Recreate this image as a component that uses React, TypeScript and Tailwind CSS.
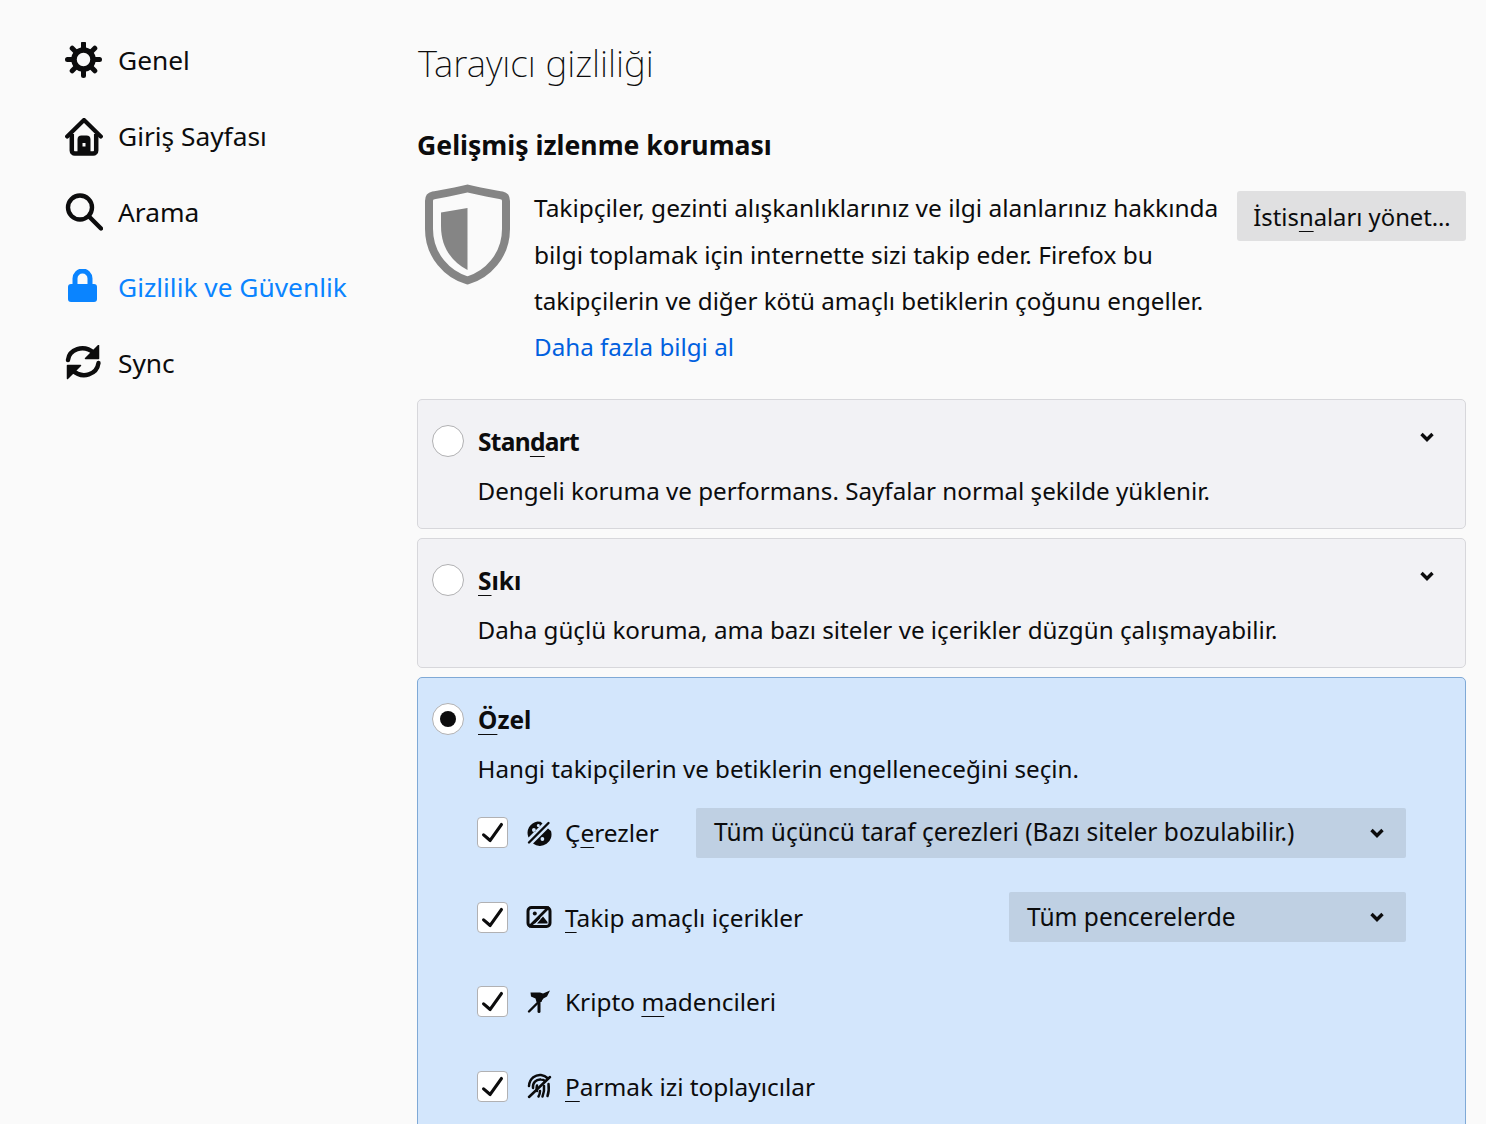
import type { ReactNode } from "react";

const Chevron = ({ className }: { className: string }) => (
  <svg viewBox="0 0 14 10" className={className} fill="none" stroke="#0c0c0d" strokeWidth="3.4">
    <path d="M1.5 2 7 7.500 12.500 2" />
  </svg>
);

const GearIcon = () => (
  <svg viewBox="0 1 38 38" className="h-[38px] w-[38px]" fill="none" stroke="#0c0c0d">
    <circle cx="18.500" cy="18.500" r="9.500" strokeWidth="5.500" />
    <path
      d="M18.500 2.500v5M18.500 29.500v5M2.500 18.500h5M29.500 18.500h5M7.200 7.200l3.500 3.500M26.300 26.300l3.500 3.500M29.800 7.200l-3.500 3.500M10.700 26.300l-3.500 3.500"
      strokeWidth="5"
      strokeLinecap="round"
    />
  </svg>
);

const HomeIcon = () => (
  <svg viewBox="0 0 38 38" className="h-[38px] w-[38px]" fill="none" stroke="#0c0c0d">
    <path d="M2.200 18.500 19 2 35.800 18.500" strokeWidth="4.200" strokeLinecap="round" strokeLinejoin="round" />
    <path d="M6.800 16v16.500a3 3 0 0 0 3 3h18.400a3 3 0 0 0 3-3V16" strokeWidth="4.500" />
    <path
      fillRule="evenodd"
      fill="#0c0c0d"
      stroke="none"
      d="M12.500 35V21.500a4 4 0 0 1 4-4h5a4 4 0 0 1 4 4V35zM17.500 25v3.500h3V25z"
    />
  </svg>
);

const SearchIcon = () => (
  <svg viewBox="0 1 38 38" className="h-[38px] w-[38px]" fill="none" stroke="#0c0c0d" strokeWidth="4.400">
    <circle cx="15" cy="15.500" r="12" />
    <path d="m24 24.500 12 12" strokeLinecap="round" />
  </svg>
);

const LockIcon = () => (
  <svg viewBox="0 2 38 38" className="h-[38px] w-[38px]" fill="none">
    <path d="M10 19v-7.500a7.500 7.500 0 0 1 15 0V19" stroke="#0a84ff" strokeWidth="5" />
    <rect x="3" y="17" width="29" height="18" rx="3" fill="#0a84ff" />
  </svg>
);

const SyncIcon = () => (
  <svg viewBox="1 3 38 38" className="h-[38px] w-[38px]" fill="none" stroke="#0c0c0d">
    <path d="M4 18C5 8 19 1.500 30 11" strokeWidth="4.400" strokeLinecap="round" />
    <path d="M34.500 21C33 32 19 38 8 28" strokeWidth="4.400" strokeLinecap="round" />
    <path d="M34.500 3.500v13h-13z" fill="#0c0c0d" stroke="#0c0c0d" strokeWidth="1.500" strokeLinejoin="round" />
    <path d="M3.500 36.500v-13h13z" fill="#0c0c0d" stroke="#0c0c0d" strokeWidth="1.500" strokeLinejoin="round" />
  </svg>
);

const ShieldIcon = () => (
  <svg viewBox="0 0 88 102" className="h-[102px] w-[88px]">
    <path
      d="M43.500 4.500 C32 7.500 20 9.500 9 11.500 C6.500 12 5 14 5 17 V45 C5 72 24 91 43.500 96.500 C63 91 82 72 82 45 V17 C82 14 80.500 12 78 11.500 C67 9.500 55 7.500 43.500 4.500 Z"
      fill="none"
      stroke="#858585"
      strokeWidth="8"
      strokeLinejoin="round"
    />
    <path d="M43.500 24 V86 C27 77 17 63 17 42 V28.500 Z" fill="#858585" />
  </svg>
);

const CookieIcon = () => (
  <svg viewBox="0 0 26 26" className="h-[26px] w-[26px]">
    <path
      fillRule="evenodd"
      fill="#0c0c0d"
      d="M11.500 1.500A11.500 11.500 0 0 0 2.500 17.500L16.500 3.500 14.500 1.800zM6 10a1.900 1.900 0 1 1 3.800 0 1.900 1.900 0 0 1-3.800 0zM10.800 5.500a1.500 1.500 0 1 1 3 0 1.500 1.500 0 0 1-3 0z"
    />
    <path
      fillRule="evenodd"
      fill="#0c0c0d"
      d="M7 23.500 22 8.500l3 2.500a11.500 11.500 0 0 1-18 12.500zM14.500 19a1.900 1.900 0 1 0 3.800 0 1.900 1.900 0 0 0-3.800 0z"
    />
    <path d="M3 22.500 22.500 3" stroke="#0c0c0d" strokeWidth="2.400" strokeLinecap="round" />
  </svg>
);

const TrackerIcon = () => (
  <svg viewBox="0 0 26 26" className="h-[26px] w-[26px]" fill="none" stroke="#0c0c0d">
    <rect x="2" y="3.500" width="22" height="19" rx="3.500" strokeWidth="3" />
    <path d="M3 23 23 3" strokeWidth="2.600" />
    <circle cx="8.800" cy="9.500" r="2" fill="#0c0c0d" stroke="none" />
    <path d="M5.500 19.500 13 12.500l1.500 1.500-5.500 5.500zM17 12.500l4.500 5.500v1.500H11z" fill="#0c0c0d" stroke="none" />
  </svg>
);

const MinerIcon = () => (
  <svg viewBox="0 0 26 26" className="h-[26px] w-[26px]" fill="none" stroke="#0c0c0d">
    <path d="M4.500 3.500H14L17 4.500 24 1.500 21 7.500 16.500 10 15.500 13H10.500L9.500 9.500 5 7.500z" fill="#0c0c0d" stroke="none" />
    <path d="M3 22.500 16 9.500" strokeWidth="2.400" strokeLinecap="round" />
    <path d="M13 13v9.500" strokeWidth="3" strokeLinecap="round" />
  </svg>
);

const FingerprintIcon = () => (
  <svg viewBox="0 0 26 26" className="h-[26px] w-[26px]" fill="none" stroke="#0c0c0d" strokeWidth="2.500" strokeLinecap="round">
    <path d="M3 13C3.500 5 10 1.500 15 2c3 .3 5 1.500 7 3.500" />
    <path d="M7 15c-.5-5 3-9 8-8.500 1.500 0 3 .6 4 1.500" />
    <path d="M11 18c-.5-2-.500-4 0-5.500" />
    <path d="M3 24 24 4" />
    <path d="M22.500 11c.5 4 .500 8-1 12" />
    <path d="M18 13c.5 4 0 7-1.500 10.500" />
    <path d="M14 18c0 2-.5 4-1.500 5.500" />
  </svg>
);

const nav: { icon: ReactNode; label: string; active?: boolean }[] = [
  { icon: <GearIcon />, label: "Genel" },
  { icon: <HomeIcon />, label: "Giriş Sayfası" },
  { icon: <SearchIcon />, label: "Arama" },
  { icon: <LockIcon />, label: "Gizlilik ve Güvenlik", active: true },
  { icon: <SyncIcon />, label: "Sync" },
];

const Radio = ({ checked }: { checked?: boolean }) => (
  <span className="flex h-8 w-8 shrink-0 items-center justify-center rounded-full border border-[#b1b1b3] bg-white">
    {checked && <span className="h-4 w-4 rounded-full bg-[#0c0c0d]" />}
  </span>
);

const U = ({ children }: { children: ReactNode }) => (
  <span className="underline decoration-1 underline-offset-[5px]">{children}</span>
);

function PresetCard({ label, desc }: { label: ReactNode; desc: string }) {
  return (
    <div className="relative h-[130px] rounded-[5px] border border-[#d7d7db] bg-[#f2f2f5] pl-[14px] pt-[25px]">
      <div className="flex h-8 items-center gap-[14px]">
        <Radio />
        <span className="pt-[2px] text-[24.500px] font-bold">{label}</span>
      </div>
      <p className="mt-[17px] pl-[45.500px] text-[24.200px] leading-[34px]">{desc}</p>
      <Chevron className="absolute right-[31px] top-[32px] h-[10px] w-[14px]" />
    </div>
  );
}

function TrackerRow({ icon, children, select }: { icon: ReactNode; children: ReactNode; select?: ReactNode }) {
  return (
    <div className="flex h-[51px] items-center">
      <span className="flex h-[31px] w-[31px] shrink-0 items-center justify-center rounded-[4px] border border-[#b1b1b3] bg-white">
        <svg viewBox="0 0 31 31" className="h-[31px] w-[31px]" fill="none" stroke="#0c0c0d" strokeWidth="3.400" strokeLinecap="round" strokeLinejoin="round">
          <path d="m6 18 7 6L25 7" />
        </svg>
      </span>
      <span className="ml-[18px] flex w-[26px] shrink-0 justify-center">{icon}</span>
      <span className="ml-[13px] shrink-0 pt-[2px] text-[24.400px]">{children}</span>
      {select}
    </div>
  );
}

const Select = ({ text, className }: { text: string; className: string }) => (
  <div className={`flex h-[50px] items-center justify-between rounded-[2px] bg-[#bfd0e3] pl-[18px] pr-[22px] text-[24.500px] ${className}`}>
    <span>{text}</span>
    <Chevron className="h-[10px] w-[14px]" />
  </div>
);

export default function App() {
  return (
    <div
      className="flex h-[1124px] overflow-hidden bg-[#fafafa] text-[#0c0c0d]"
      style={{ fontFamily: '"Noto Sans", sans-serif' }}
    >
      <aside className="w-[417px] shrink-0 pl-[65px] pt-[42px]">
        <ul className="flex flex-col gap-[37.700px]">
          {nav.map((item) => (
            <li key={item.label} className={`flex h-[38px] items-center gap-[15px] text-[26.300px] ${item.active ? "text-[#0a84ff]" : ""}`}>
              {item.icon}
              <span>{item.label}</span>
            </li>
          ))}
        </ul>
      </aside>

      <main className="mr-[20px] min-w-0 flex-1 pt-[38px]">
        <h1 className="pl-px text-[36.900px] leading-[50px] font-extralight text-[#0c0c0d]">Tarayıcı gizliliği</h1>
        <h2 className="mt-[37px] text-[26.600px] leading-[40px] font-bold">Gelişmiş izlenme koruması</h2>

        <section className="mt-[20px] flex items-start">
          <div className="ml-[7px] shrink-0 -mt-[1px]">
            <ShieldIcon />
          </div>
          <div className="ml-[22px] w-[695px] text-[24.470px] leading-[46.500px]">
            <p className="whitespace-nowrap">Takipçiler, gezinti alışkanlıklarınız ve ilgi alanlarınız hakkında</p>
            <p className="whitespace-nowrap">bilgi toplamak için internette sizi takip eder. Firefox bu</p>
            <p className="whitespace-nowrap text-[24.200px]">takipçilerin ve diğer kötü amaçlı betiklerin çoğunu engeller.</p>
            <a className="relative -top-px text-[24.200px] text-[#0060df]" href="#">Daha fazla bilgi al</a>
          </div>
          <button className="ml-auto mt-[6px] h-[50px] w-[229px] shrink-0 rounded-[3px] bg-[#e0e0e1] pl-px pt-[3px] text-[23.800px]">
            İstis<U>n</U>aları yönet…
          </button>
        </section>

        <div className="mt-[28px] flex flex-col gap-[9px]">
          <PresetCard label={<span className="tracking-[-0.7px]">Stan<U>d</U>art</span>} desc="Dengeli koruma ve performans. Sayfalar normal şekilde yüklenir." />
          <PresetCard label={<><U>S</U>ıkı</>} desc="Daha güçlü koruma, ama bazı siteler ve içerikler düzgün çalışmayabilir." />

          <div className="h-[600px] rounded-[5px] border border-[#7fa9d6] bg-[#d3e6fc] pl-[14px] pt-[25px]">
            <div className="flex h-8 items-center gap-[14px]">
              <Radio checked />
              <span className="pt-[2px] text-[24.500px] font-bold"><U>Ö</U>zel</span>
            </div>
            <p className="mt-[17px] pl-[45.500px] text-[24.200px] leading-[34px]">Hangi takipçilerin ve betiklerin engelleneceğini seçin.</p>
            <div className="mt-[21px] flex flex-col gap-[33.500px] pl-[45px] pr-[59px]">
              <TrackerRow icon={<CookieIcon />} select={<Select text="Tüm üçüncü taraf çerezleri (Bazı siteler bozulabilir.)" className="ml-auto w-[710px]" />}>
                Ç<U>e</U>rezler
              </TrackerRow>
              <TrackerRow icon={<TrackerIcon />} select={<Select text="Tüm pencerelerde" className="ml-auto w-[397px]" />}>
                <U>T</U>akip amaçlı içerikler
              </TrackerRow>
              <TrackerRow icon={<MinerIcon />}>
                Kripto <U>m</U>adencileri
              </TrackerRow>
              <TrackerRow icon={<FingerprintIcon />}>
                <U>P</U>armak izi toplayıcılar
              </TrackerRow>
            </div>
          </div>
        </div>
      </main>
    </div>
  );
}
